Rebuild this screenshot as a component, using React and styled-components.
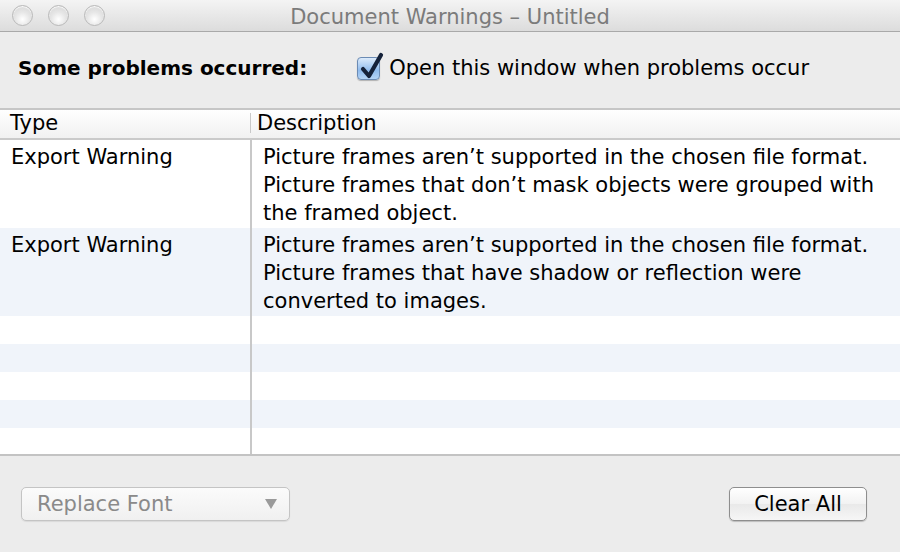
import React from "react";
import styled, { createGlobalStyle } from "styled-components";

const GlobalStyle = createGlobalStyle`
  html, body {
    margin: 0;
    padding: 0;
    background: #ececec;
  }
  body {
    font-family: "DejaVu Sans", "Liberation Sans", sans-serif;
    color: #000;
  }
`;

const Window = styled.div`
  width: 900px;
  height: 552px;
  display: flex;
  flex-direction: column;
  background: #ececec;
  overflow: hidden;
`;

const TitleBar = styled.div`
  height: 31px;
  flex: 0 0 31px;
  position: relative;
  display: flex;
  align-items: center;
  justify-content: center;
  background: linear-gradient(#f4f4f4, #dcdcdc);
  border-bottom: 1px solid #a9a9a9;
`;

const Lights = styled.div`
  position: absolute;
  left: 12px;
  top: 5px;
  display: flex;
  gap: 15px;
`;

const Light = styled.span`
  width: 21px;
  height: 21px;
  border-radius: 50%;
  border: 1px solid #b9b9b9;
  box-sizing: border-box;
  background: radial-gradient(circle at 50% 70%, #ffffff 0%, #e6e6e6 45%, #d2d2d2 100%);
  box-shadow: inset 0 1px 1px rgba(255, 255, 255, 0.9);
`;

const Title = styled.div`
  font-size: 21px;
  color: #7b7b7b;
  position: relative;
  top: 1px;
`;

const Header = styled.div`
  height: 76px;
  flex: 0 0 76px;
  box-sizing: border-box;
  display: flex;
  align-items: center;
  padding: 0 18px 4px;
  gap: 50px;
`;

const HeaderLabel = styled.div`
  font-weight: bold;
  font-size: 20px;
`;

const CheckRow = styled.label`
  display: flex;
  align-items: center;
  gap: 9px;
  font-size: 21px;
`;

const Box = styled.span`
  position: relative;
  width: 23px;
  height: 23px;
  border-radius: 4px;
  border: 1px solid #6b8bb4;
  box-sizing: border-box;
  background: linear-gradient(#dcebfb, #8fbbed 60%, #b4d4f6);
  box-shadow: 0 1px 1px rgba(0, 0, 0, 0.25);

  svg {
    position: absolute;
    left: 1px;
    top: -6px;
  }
`;

const Table = styled.div`
  flex: 0 0 auto;
  border-top: 2px solid #c6c6c6;
  border-bottom: 2px solid #c3c3c3;
  background: #fff;
  font-size: 21px;
`;

const HeadRow = styled.div`
  display: grid;
  grid-template-columns: 250px 1fr;
  height: 28px;
  background: linear-gradient(#ffffff, #f1f1f1);
  border-bottom: 2px solid #cacaca;
  align-items: center;
`;

const HeadCell = styled.div`
  padding-left: ${(p) => (p.$first ? "10px" : "6px")};
  border-left: ${(p) => (p.$first ? "none" : "1px solid #c9c9c9")};
  height: 20px;
  line-height: 20px;
  position: relative;
  top: -1px;
`;

const Body = styled.div`
  height: 314px;
  display: flex;
  flex-direction: column;
  overflow: hidden;
`;

const Row = styled.div`
  display: grid;
  grid-template-columns: 250px 1fr;
  background: ${(p) => (p.$alt ? "#f0f4fa" : "#ffffff")};
  height: ${(p) => (p.$empty ? "28px" : "auto")};
  flex: ${(p) => (p.$last ? "1 1 auto" : "0 0 auto")};
  line-height: 28px;
`;

const Cell = styled.div`
  padding: 3px 0 1px 11px;
`;

const DescCell = styled.div`
  border-left: 2px solid #c8c8c8;
  padding: 3px 0 1px 11px;
`;

const Footer = styled.div`
  flex: 1 1 auto;
  display: flex;
  align-items: center;
  justify-content: space-between;
  padding: 0 33px 0 21px;
`;

const PopUp = styled.div`
  width: 269px;
  height: 34px;
  box-sizing: border-box;
  border: 1px solid #c4c4c4;
  border-radius: 5px;
  background: linear-gradient(#fbfbfb, #f0f0f0);
  display: flex;
  align-items: center;
  justify-content: space-between;
  padding: 0 12px 0 15px;
  font-size: 21px;
  color: #8a8a8a;
  box-shadow: 0 1px 1px rgba(0, 0, 0, 0.08);
`;

const Caret = styled.span`
  width: 0;
  height: 0;
  border-left: 6px solid transparent;
  border-right: 6px solid transparent;
  border-top: 10px solid #9a9a9a;
`;

const Button = styled.button`
  width: 138px;
  height: 34px;
  border: 1px solid #8e8e8e;
  border-radius: 5px;
  background: linear-gradient(#ffffff, #f2f2f2 50%, #e9e9e9 51%, #f6f6f6);
  font-family: inherit;
  font-size: 21px;
  color: #000;
  box-shadow: 0 1px 1px rgba(0, 0, 0, 0.2);
  padding: 0;
`;

const rows = [
  {
    type: "Export Warning",
    lines: [
      "Picture frames aren’t supported in the chosen file format.",
      "Picture frames that don’t mask objects were grouped with",
      "the framed object.",
    ],
  },
  {
    type: "Export Warning",
    lines: [
      "Picture frames aren’t supported in the chosen file format.",
      "Picture frames that have shadow or reflection were",
      "converted to images.",
    ],
  },
];

function Check() {
  return (
    <svg width="26" height="30" viewBox="0 0 26 30">
      <path
        d="M4 17 L10 24 L22 3"
        fill="none"
        stroke="#15223a"
        strokeWidth="4.2"
        strokeLinecap="round"
        strokeLinejoin="round"
      />
    </svg>
  );
}

export default function App() {
  return (
    <Window>
      <GlobalStyle />
      <TitleBar>
        <Lights>
          <Light />
          <Light />
          <Light />
        </Lights>
        <Title>Document Warnings – Untitled</Title>
      </TitleBar>
      <Header>
        <HeaderLabel>Some problems occurred:</HeaderLabel>
        <CheckRow>
          <Box>
            <Check />
          </Box>
          Open this window when problems occur
        </CheckRow>
      </Header>
      <Table>
        <HeadRow>
          <HeadCell $first>Type</HeadCell>
          <HeadCell>Description</HeadCell>
        </HeadRow>
        <Body>
          {rows.map((r, i) => (
            <Row key={i} $alt={i % 2 === 1}>
              <Cell>{r.type}</Cell>
              <DescCell>
                {r.lines.map((l, j) => (
                  <div key={j}>{l}</div>
                ))}
              </DescCell>
            </Row>
          ))}
          {[0, 1, 2, 3, 4].map((i) => (
            <Row key={"e" + i} $empty $alt={i % 2 === 1} $last={i === 4}>
              <Cell />
              <DescCell />
            </Row>
          ))}
        </Body>
      </Table>
      <Footer>
        <PopUp>
          Replace Font
          <Caret />
        </PopUp>
        <Button>Clear All</Button>
      </Footer>
    </Window>
  );
}
